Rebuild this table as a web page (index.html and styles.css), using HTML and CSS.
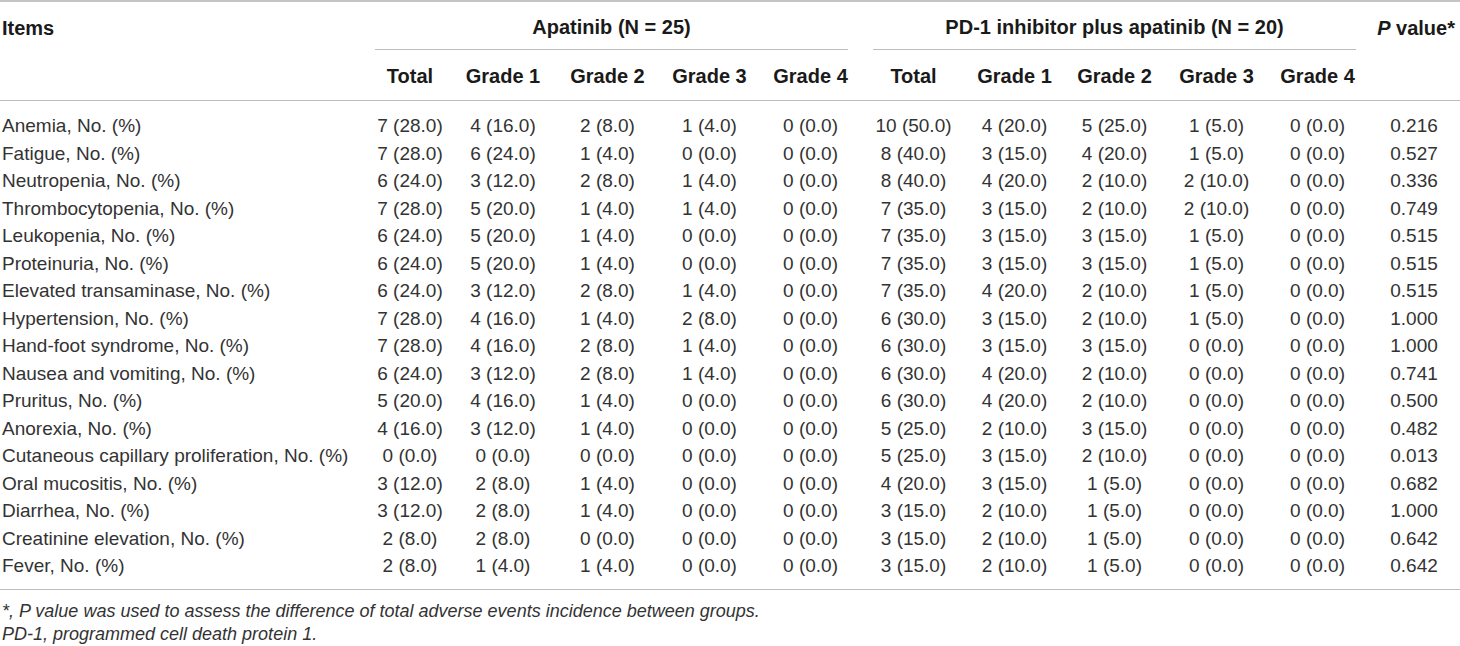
FILE: index.html
```html
<!DOCTYPE html>
<html>
<head>
<meta charset="utf-8">
<link rel="stylesheet" href="styles.css">
</head>
<body>
<table class="ae">
<colgroup>
<col class="c-items"><col class="c-80"><col class="c-106"><col class="c-103"><col class="c-101"><col class="c-101">
<col class="c-105"><col class="c-97"><col class="c-103"><col class="c-101"><col class="c-101"><col class="c-92">
</colgroup>
<thead>
<tr class="h1">
<th class="items" rowspan="2">Items</th>
<th class="group" colspan="5"><div class="span g1">Apatinib (N = 25)</div></th>
<th class="group" colspan="5"><div class="span g2">PD-1 inhibitor plus apatinib (N = 20)</div></th>
<th class="pval" rowspan="2"><i>P</i> value*</th>
</tr>
<tr class="h2">
<th>Total</th><th>Grade 1</th><th>Grade 2</th><th>Grade 3</th><th>Grade 4</th>
<th>Total</th><th>Grade 1</th><th>Grade 2</th><th>Grade 3</th><th>Grade 4</th>
</tr>
</thead>
<tbody>
<tr class="first"><td>Anemia, No. (%)</td><td>7 (28.0)</td><td>4 (16.0)</td><td>2 (8.0)</td><td>1 (4.0)</td><td>0 (0.0)</td><td>10 (50.0)</td><td>4 (20.0)</td><td>5 (25.0)</td><td>1 (5.0)</td><td>0 (0.0)</td><td>0.216</td></tr>
<tr><td>Fatigue, No. (%)</td><td>7 (28.0)</td><td>6 (24.0)</td><td>1 (4.0)</td><td>0 (0.0)</td><td>0 (0.0)</td><td>8 (40.0)</td><td>3 (15.0)</td><td>4 (20.0)</td><td>1 (5.0)</td><td>0 (0.0)</td><td>0.527</td></tr>
<tr><td>Neutropenia, No. (%)</td><td>6 (24.0)</td><td>3 (12.0)</td><td>2 (8.0)</td><td>1 (4.0)</td><td>0 (0.0)</td><td>8 (40.0)</td><td>4 (20.0)</td><td>2 (10.0)</td><td>2 (10.0)</td><td>0 (0.0)</td><td>0.336</td></tr>
<tr><td>Thrombocytopenia, No. (%)</td><td>7 (28.0)</td><td>5 (20.0)</td><td>1 (4.0)</td><td>1 (4.0)</td><td>0 (0.0)</td><td>7 (35.0)</td><td>3 (15.0)</td><td>2 (10.0)</td><td>2 (10.0)</td><td>0 (0.0)</td><td>0.749</td></tr>
<tr><td>Leukopenia, No. (%)</td><td>6 (24.0)</td><td>5 (20.0)</td><td>1 (4.0)</td><td>0 (0.0)</td><td>0 (0.0)</td><td>7 (35.0)</td><td>3 (15.0)</td><td>3 (15.0)</td><td>1 (5.0)</td><td>0 (0.0)</td><td>0.515</td></tr>
<tr><td>Proteinuria, No. (%)</td><td>6 (24.0)</td><td>5 (20.0)</td><td>1 (4.0)</td><td>0 (0.0)</td><td>0 (0.0)</td><td>7 (35.0)</td><td>3 (15.0)</td><td>3 (15.0)</td><td>1 (5.0)</td><td>0 (0.0)</td><td>0.515</td></tr>
<tr><td>Elevated transaminase, No. (%)</td><td>6 (24.0)</td><td>3 (12.0)</td><td>2 (8.0)</td><td>1 (4.0)</td><td>0 (0.0)</td><td>7 (35.0)</td><td>4 (20.0)</td><td>2 (10.0)</td><td>1 (5.0)</td><td>0 (0.0)</td><td>0.515</td></tr>
<tr><td>Hypertension, No. (%)</td><td>7 (28.0)</td><td>4 (16.0)</td><td>1 (4.0)</td><td>2 (8.0)</td><td>0 (0.0)</td><td>6 (30.0)</td><td>3 (15.0)</td><td>2 (10.0)</td><td>1 (5.0)</td><td>0 (0.0)</td><td>1.000</td></tr>
<tr><td>Hand-foot syndrome, No. (%)</td><td>7 (28.0)</td><td>4 (16.0)</td><td>2 (8.0)</td><td>1 (4.0)</td><td>0 (0.0)</td><td>6 (30.0)</td><td>3 (15.0)</td><td>3 (15.0)</td><td>0 (0.0)</td><td>0 (0.0)</td><td>1.000</td></tr>
<tr><td>Nausea and vomiting, No. (%)</td><td>6 (24.0)</td><td>3 (12.0)</td><td>2 (8.0)</td><td>1 (4.0)</td><td>0 (0.0)</td><td>6 (30.0)</td><td>4 (20.0)</td><td>2 (10.0)</td><td>0 (0.0)</td><td>0 (0.0)</td><td>0.741</td></tr>
<tr><td>Pruritus, No. (%)</td><td>5 (20.0)</td><td>4 (16.0)</td><td>1 (4.0)</td><td>0 (0.0)</td><td>0 (0.0)</td><td>6 (30.0)</td><td>4 (20.0)</td><td>2 (10.0)</td><td>0 (0.0)</td><td>0 (0.0)</td><td>0.500</td></tr>
<tr><td>Anorexia, No. (%)</td><td>4 (16.0)</td><td>3 (12.0)</td><td>1 (4.0)</td><td>0 (0.0)</td><td>0 (0.0)</td><td>5 (25.0)</td><td>2 (10.0)</td><td>3 (15.0)</td><td>0 (0.0)</td><td>0 (0.0)</td><td>0.482</td></tr>
<tr><td>Cutaneous capillary proliferation, No. (%)</td><td>0 (0.0)</td><td>0 (0.0)</td><td>0 (0.0)</td><td>0 (0.0)</td><td>0 (0.0)</td><td>5 (25.0)</td><td>3 (15.0)</td><td>2 (10.0)</td><td>0 (0.0)</td><td>0 (0.0)</td><td>0.013</td></tr>
<tr><td>Oral mucositis, No. (%)</td><td>3 (12.0)</td><td>2 (8.0)</td><td>1 (4.0)</td><td>0 (0.0)</td><td>0 (0.0)</td><td>4 (20.0)</td><td>3 (15.0)</td><td>1 (5.0)</td><td>0 (0.0)</td><td>0 (0.0)</td><td>0.682</td></tr>
<tr><td>Diarrhea, No. (%)</td><td>3 (12.0)</td><td>2 (8.0)</td><td>1 (4.0)</td><td>0 (0.0)</td><td>0 (0.0)</td><td>3 (15.0)</td><td>2 (10.0)</td><td>1 (5.0)</td><td>0 (0.0)</td><td>0 (0.0)</td><td>1.000</td></tr>
<tr><td>Creatinine elevation, No. (%)</td><td>2 (8.0)</td><td>2 (8.0)</td><td>0 (0.0)</td><td>0 (0.0)</td><td>0 (0.0)</td><td>3 (15.0)</td><td>2 (10.0)</td><td>1 (5.0)</td><td>0 (0.0)</td><td>0 (0.0)</td><td>0.642</td></tr>
<tr class="last"><td>Fever, No. (%)</td><td>2 (8.0)</td><td>1 (4.0)</td><td>1 (4.0)</td><td>0 (0.0)</td><td>0 (0.0)</td><td>3 (15.0)</td><td>2 (10.0)</td><td>1 (5.0)</td><td>0 (0.0)</td><td>0 (0.0)</td><td>0.642</td></tr>
</tbody>
</table>
<div class="notes">
<p>*, P value was used to assess the difference of total adverse events incidence between groups.</p>
<p>PD-1, programmed cell death protein 1.</p>
</div>
</body>
</html>
```

FILE: styles.css
```css
html, body {
  margin: 0;
  padding: 0;
  background: #ffffff;
}
body {
  font-family: "Liberation Sans", Arial, Helvetica, sans-serif;
  font-size: 19px;
  color: #333333;
  width: 1460px;
}
.ae {
  width: 1460px;
  table-layout: fixed;
  border-collapse: collapse;
  border-spacing: 0;
  border-top: 2px solid #c4c4c4;
  border-bottom: 1px solid #bdbdbd;
}
.c-items { width: 370px; }
.c-80 { width: 80px; }
.c-106 { width: 106px; }
.c-103 { width: 103px; }
.c-101 { width: 101px; }
.c-105 { width: 105px; }
.c-97 { width: 97px; }
.c-92 { width: 92px; }

.ae th {
  font-weight: bold;
  font-size: 20px;
  color: #1a1a1a;
  padding: 0;
  text-align: center;
  vertical-align: middle;
  white-space: nowrap;
}
.ae thead {
  border-bottom: 1px solid #bdbdbd;
}
.h1 { height: 49px; }
.h2 { height: 50px; }
.h2 th { padding-top: 3px; }
.ae th.items {
  text-align: left;
  vertical-align: top;
  padding: 15px 0 0 2px;
  line-height: 22px;
}
.ae th.pval {
  vertical-align: top;
  padding: 15px 0 0 4px;
  line-height: 22px;
}
.ae th.group {
  vertical-align: bottom;
  padding: 0;
}
.span {
  height: 48px;
  line-height: 50px;
  border-bottom: 1px solid #bdbdbd;
  box-sizing: border-box;
}
.g1 { margin: 0 13px 0 5px; }
.g2 { margin: 0 12px 0 12px; }

.ae td {
  padding: 0;
  height: 27.5px;
  line-height: 20px;
  text-align: center;
  vertical-align: middle;
  white-space: nowrap;
}
.ae td:first-child {
  text-align: left;
  padding-left: 2px;
}
.ae tr.first td { padding-top: 12px; }
.ae tr.last td { padding-bottom: 9px; }

.notes {
  padding-top: 10px;
}
.notes p {
  margin: 0;
  font-style: italic;
  font-size: 18px;
  line-height: 23px;
  color: #333333;
  padding-left: 2px;
}
```
